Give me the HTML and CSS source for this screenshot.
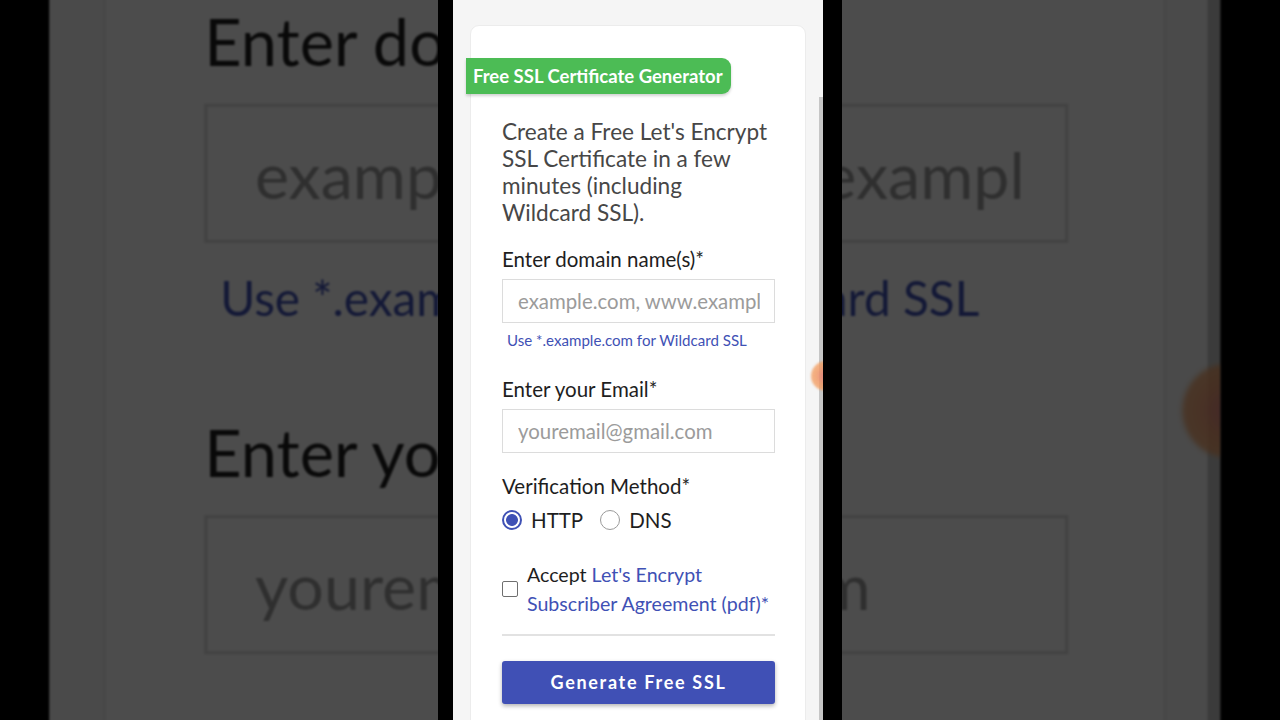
FILE: index.html
```html
<!DOCTYPE html>
<html lang="en">
<head>
<meta charset="utf-8">
<title>Free SSL Certificate Generator</title>
<link rel="stylesheet" href="styles.css">
</head>
<body>
<div class="frame">
  <div class="layer backdrop" aria-hidden="true">
    <div class="slot">
      <div class="screen screen-copy">
        <div class="page">
          <div class="card">
            <div class="badge">Free SSL Certificate Generator</div>
            <p class="intro">Create a Free Let's Encrypt SSL Certificate in a few minutes (including Wildcard SSL).</p>
            <div class="label first">Enter domain name(s)*</div>
            <div class="field"><span class="ph">example.com, www.example.com</span></div>
            <div class="hint">Use *.example.com for Wildcard SSL</div>
            <div class="label second">Enter your Email*</div>
            <div class="field"><span class="ph">youremail@gmail.com</span></div>
            <div class="label third">Verification Method*</div>
            <div class="radios">
              <span class="radio on"></span><span class="opt">HTTP</span>
              <span class="radio"></span><span class="opt">DNS</span>
            </div>
            <div class="accept">
              <span class="check"></span>
              <span class="accept-text">Accept <span class="link">Let's Encrypt Subscriber Agreement (pdf)*</span></span>
            </div>
            <div class="rule"></div>
            <div class="btn">Generate Free SSL</div>
          </div>
        </div>
        <div class="track"><div class="thumb"></div></div>
        <div class="blob"></div>
      </div>
    </div>
  </div>
  <div class="layer front">
    <div class="slot device">
      <div class="screen">
        <div class="page">
          <div class="card">
            <div class="badge">Free SSL Certificate Generator</div>
            <p class="intro">Create a Free Let's Encrypt SSL Certificate in a few minutes (including Wildcard SSL).</p>
            <div class="label first">Enter domain name(s)*</div>
            <div class="field"><span class="ph">example.com, www.example.com</span></div>
            <div class="hint">Use *.example.com for Wildcard SSL</div>
            <div class="label second">Enter your Email*</div>
            <div class="field"><span class="ph">youremail@gmail.com</span></div>
            <div class="label third">Verification Method*</div>
            <div class="radios">
              <span class="radio on"></span><span class="opt">HTTP</span>
              <span class="radio"></span><span class="opt">DNS</span>
            </div>
            <div class="accept">
              <span class="check"></span>
              <span class="accept-text">Accept <span class="link">Let's Encrypt Subscriber Agreement (pdf)*</span></span>
            </div>
            <div class="rule"></div>
            <div class="btn">Generate Free SSL</div>
          </div>
        </div>
        <div class="track"><div class="thumb"></div></div>
        <div class="blob"></div>
      </div>
    </div>
  </div>
</div>
</body>
</html>
```
FILE: styles.css
```css
* { box-sizing: border-box; }
html, body { margin: 0; padding: 0; background: #000; }
body { font-family: "Lato", "Open Sans", "Liberation Sans", sans-serif; }

.frame {
  width: 1280px;
  height: 720px;
  display: grid;
  background: #000;
  overflow: hidden;
}
.layer {
  grid-area: 1 / 1;
  display: flex;
  justify-content: center;
}
.front {
  position: relative;
  z-index: 1;
}
.slot {
  width: 404px;
  height: 720px;
  padding: 0 19px 0 15px;
}
.device { background: #000; }

.screen {
  width: 370px;
  height: 720px;
  background: #f5f5f5;
  display: flex;
  overflow: hidden;
  position: relative;
}
.screen-copy {
  transform: scale(3.165);
  transform-origin: 186.5px 360px;
  filter: brightness(0.3) blur(0.35px);
}

.page {
  width: 366px;
  padding: 25px 13px 0 17px;
}
.track {
  width: 4px;
  display: flex;
  flex-direction: column;
  padding-top: 97px;
}
.thumb {
  flex: 1;
  background: #c6c6c6;
}
.blob {
  position: absolute;
  left: 358px;
  top: 361px;
  width: 30px;
  height: 30px;
  border-radius: 50%;
  background: radial-gradient(circle at 50% 50%, rgba(232,120,120,0.85) 0, rgba(242,150,95,0.8) 45%, rgba(246,170,90,0.65) 100%);
  filter: blur(0.8px);
}

.card {
  width: 336px;
  min-height: 760px;
  background: #fff;
  border: 1px solid #ececec;
  border-radius: 9px;
  padding: 32px 30px 0 31px;
}
.badge {
  display: inline-block;
  margin-left: -36px;
  height: 36px;
  line-height: 36px;
  padding: 0 8px 0 7px;
  background: #4cbc55;
  color: #fff;
  font-weight: 700;
  font-size: 18.5px;
  border-radius: 0 9px 9px 0;
  box-shadow: 0 2px 3px rgba(0,0,0,0.18);
  white-space: nowrap;
}
.intro {
  margin: 24px 0 0;
  font-size: 22.6px;
  line-height: 27px;
  color: #474747;
}
.label {
  font-size: 20.5px;
  line-height: 24px;
  color: #1e1e1e;
}
.label.first { margin-top: 21px; }
.label.second { margin-top: 28px; }
.label.third { margin-top: 21px; }

.field {
  margin-top: 8px;
  height: 44px;
  border: 1px solid #dcdcdc;
  padding: 0 14px 0 15px;
  display: flex;
  align-items: center;
  overflow: hidden;
  white-space: nowrap;
}
.ph {
  font-size: 20.4px;
  color: #9b9b9b;
  overflow: hidden;
  display: block;
  width: 100%;
}
.hint {
  margin: 8px 0 0 5px;
  font-size: 15.1px;
  line-height: 18px;
  color: #3f51b5;
}

.radios {
  margin-top: 10px;
  height: 24px;
  display: flex;
  align-items: center;
  font-size: 20.5px;
  color: #1e1e1e;
}
.radio {
  width: 20px;
  height: 20px;
  border-radius: 50%;
  border: 1px solid #9a9a9a;
  background: #fff;
  flex: none;
}
.radio.on {
  border: 2px solid #3f51b5;
  background: radial-gradient(circle, #3f51b5 0, #3f51b5 5.5px, #fff 6.3px);
}
.opt { margin-left: 9px; margin-right: 17px; }

.accept {
  margin-top: 28px;
  display: flex;
  align-items: center;
}
.check {
  width: 16px;
  height: 16px;
  border: 1.5px solid #6f6f6f;
  border-radius: 2px;
  flex: none;
}
.accept-text {
  margin-left: 9px;
  font-size: 19.6px;
  line-height: 29px;
  color: #1e1e1e;
}
.link { color: #3f51b5; }

.rule {
  margin-top: 16px;
  height: 2px;
  background: #e2e2e2;
}
.btn {
  margin-top: 25px;
  height: 43px;
  line-height: 43px;
  text-align: center;
  background: #4050b5;
  color: #fff;
  font-weight: 700;
  font-size: 18px;
  letter-spacing: 1.7px;
  border-radius: 3px;
  box-shadow: 0 2px 4px rgba(0,0,0,0.3);
}
```
